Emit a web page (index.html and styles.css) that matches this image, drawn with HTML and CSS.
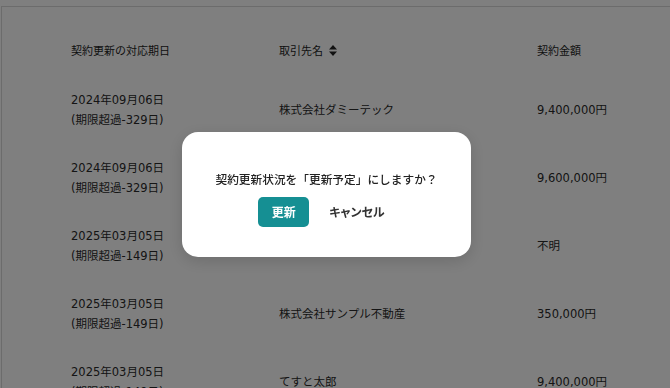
FILE: index.html
```html
<!DOCTYPE html>
<html lang="ja">
<head>
    <meta charset="UTF-8">
    <meta name="viewport" content="width=device-width, initial-scale=1.0">
    <title>契約更新</title>
    <link rel="stylesheet" href="styles.css">
</head>
<body>
    <div class="page">
        <table class="contract-table">
            <thead>
                <tr>
                    <th class="col-date">契約更新の対応期日</th>
                    <th class="col-client">取引先名
                        <svg class="sort-icon" width="8" height="11" viewBox="0 0 8 11">
                            <path d="M4 0 L8 4.4 H0 Z" fill="#222"/>
                            <path d="M4 11 L8 6.6 H0 Z" fill="#222"/>
                        </svg>
                    </th>
                    <th class="col-amount">契約金額</th>
                </tr>
            </thead>
            <tbody>
                <tr>
                    <td>2024年09月06日<br>(期限超過-329日)</td>
                    <td>株式会社ダミーテック</td>
                    <td>9,400,000円</td>
                </tr>
                <tr>
                    <td>2024年09月06日<br>(期限超過-329日)</td>
                    <td>株式会社テストサービス</td>
                    <td>9,600,000円</td>
                </tr>
                <tr>
                    <td>2025年03月05日<br>(期限超過-149日)</td>
                    <td>サンプル商事株式会社</td>
                    <td>不明</td>
                </tr>
                <tr>
                    <td>2025年03月05日<br>(期限超過-149日)</td>
                    <td>株式会社サンプル不動産</td>
                    <td>350,000円</td>
                </tr>
                <tr>
                    <td>2025年03月05日<br>(期限超過-149日)</td>
                    <td>てすと太郎</td>
                    <td>9,400,000円</td>
                </tr>
            </tbody>
        </table>
    </div>

    <div class="overlay">
        <div class="modal">
            <p class="modal-message">契約更新状況を「更新予定」にしますか？</p>
            <div class="modal-actions">
                <button class="btn-update">更新</button>
                <button class="btn-cancel">キャンセル</button>
            </div>
        </div>
    </div>
</body>
</html>
```

FILE: styles.css
```css
body {
    margin: 0;
    padding: 0;
    background-color: #fff;
    color: #2a2a2a;
    font-family: 'DejaVu Sans', 'Noto Sans CJK JP', sans-serif;
    font-size: 11.5px;
    overflow: hidden;
}
.page {
    margin-top: 6px;
    border-top: 1px solid #d8d8d8;
    border-left: 1px solid #d8d8d8;
    margin-left: 1px;
    height: 400px;
    padding: 21px 0 0 53px;
}
.contract-table {
    border-collapse: collapse;
}
.contract-table th,
.contract-table td {
    text-align: left;
    vertical-align: middle;
    padding: 14px 16px;
    line-height: 20px;
}
.contract-table th {
    font-size: 11px;
    font-weight: normal;
    color: #1e1e1e;
}
.contract-table tbody td {
    height: 40px;
}
.col-date {
    width: 176px;
}
.col-client {
    width: 226px;
}
.col-amount {
    width: 100px;
}
.sort-icon {
    vertical-align: -1px;
    margin-left: 2px;
}
.overlay {
    position: fixed;
    top: 0;
    left: 0;
    right: 0;
    bottom: 0;
    background-color: rgba(0, 0, 0, 0.5);
    display: flex;
    align-items: center;
    justify-content: center;
    padding-right: 17px;
}
.modal {
    width: 289px;
    box-sizing: border-box;
    background-color: #fff;
    border-radius: 16px;
    padding: 37px 0 30px;
    text-align: center;
    box-shadow: 0 4px 16px rgba(0, 0, 0, 0.15);
}
.modal-message {
    margin: 0 0 8px;
    font-family: 'Noto Sans CJK JP', sans-serif;
    font-size: 11.7px;
    font-weight: 500;
    line-height: 20px;
    color: #222;
}
.modal-actions {
    display: flex;
    justify-content: center;
    gap: 8px;
    padding-left: 2px;
}
.btn-update,
.btn-cancel {
    font-family: 'Noto Sans CJK JP', sans-serif;
    font-size: 12px;
    font-weight: bold;
    height: 30px;
    border: none;
    border-radius: 5px;
    cursor: pointer;
}
.btn-update {
    background-color: #158f93;
    color: #fff;
    width: 51px;
    padding: 0;
}
.btn-cancel {
    background: none;
    color: #333;
    padding: 0 12px;
    font-feature-settings: "palt";
}
```
